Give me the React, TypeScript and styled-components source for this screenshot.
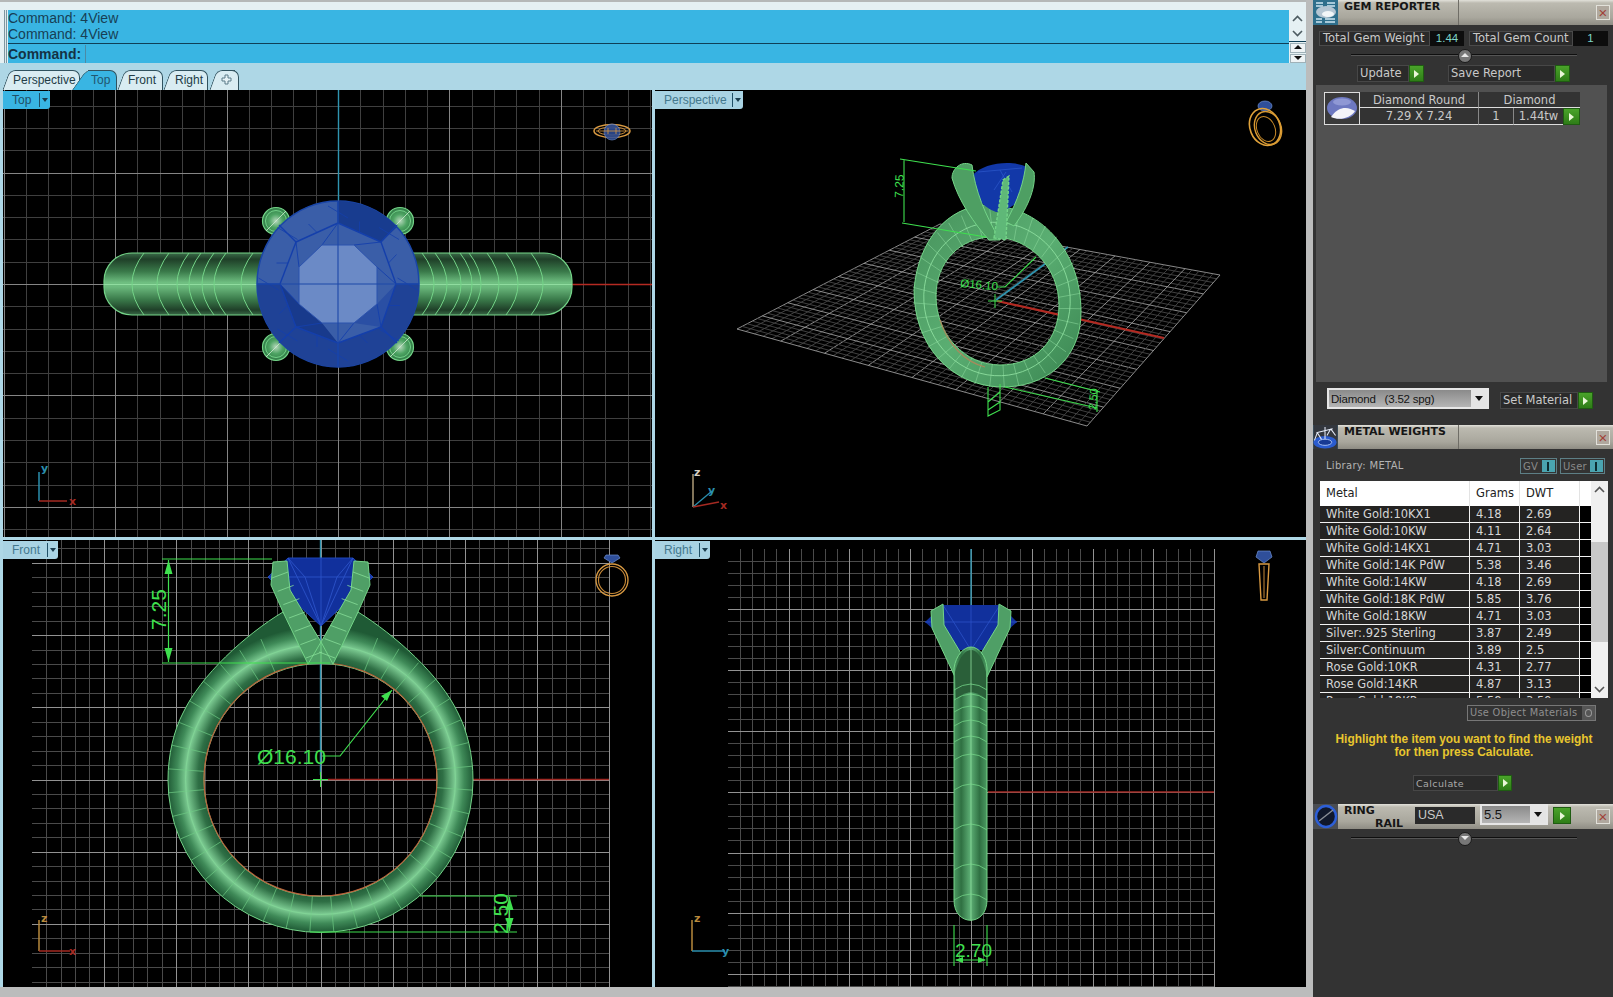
import React from 'react'
import styled, { createGlobalStyle } from 'styled-components'

const GlobalStyle = createGlobalStyle`
  html, body { margin: 0; padding: 0; background: #333; overflow: hidden; }
  #root { width: 1613px; height: 997px; }
`;

const Page = styled.div`
  width: 1613px;
  height: 997px;
  display: flex;
  background: #bbbcbc;
  font-family: "DejaVu Sans", sans-serif;
`;
const LeftColumn = styled.div`
  width: 1306px;
  display: flex;
  flex-direction: column;
  background: #aed7e6;
`;
const TopEdge = styled.div`
  height: 2px;
  background: #b5b8b8;
`;
const CommandBar = styled.div`
  display: flex;
  height: 61px;
  padding: 8px 0 0 4px;
  box-sizing: border-box;
  background: #e5f0f3;
`;
const Grip = styled.div`
  width: 3px;
  margin-right: 1px;
  background: linear-gradient(90deg, #7d96a0 0 1px, #dfe9ec 1px 2px, #7d96a0 2px);
`;
const CommandBlue = styled.div`
  flex: 1;
  display: flex;
  flex-direction: column;
  background: #39b5e3;
  font-family: "Liberation Sans", sans-serif;
  font-size: 14px;
  color: #173f55;
`;
const History = styled.div`
  height: 34px;
  box-sizing: border-box;
  border-bottom: 1px solid #0f3f57;
  line-height: 16px;
`;
const InputRow = styled.div`
  flex: 1;
  display: flex;
  align-items: center;
  font-weight: bold;
  color: #143245;
`;
const Caret = styled.span`
  height: 18px;
  width: 1px;
  margin-left: 4px;
  background: #4b8aa6;
`;
const ScrollCol = styled.div`
  width: 17px;
  display: flex;
  flex-direction: column;
  align-items: center;
  color: #4d5b61;
`;
const Chevrons = styled.div`
  height: 34px;
  width: 100%;
  display: flex;
  flex-direction: column;
  align-items: center;
  justify-content: space-between;
  box-sizing: border-box;
  padding: 5px 0 4px;
  border-bottom: 1px solid #0f3f57;
`;
const SpinBtn = styled.div<{ $down?: boolean }>`
  width: 14px;
  height: 8px;
  margin-top: 1px;
  background: #eef3f5;
  border: 1px solid #9fb1b8;
  position: relative;
  &::after {
    content: "";
    position: absolute;
    left: 3px;
    top: 1px;
    border-left: 4px solid transparent;
    border-right: 4px solid transparent;
    ${p => p.$down ? 'border-top: 4px solid #111;' : 'border-bottom: 4px solid #111;'}
  }
`;
const TabRow = styled.div`
  height: 27px;
  box-sizing: border-box;
  padding: 7px 0 0 3px;
  display: flex;
`;
const Tab = styled.div<{ $active?: boolean; $w: number; $pad: number; $ml?: number }>`
  position: relative;
  width: ${p => p.$w}px;
  height: 20px;
  margin-left: ${p => p.$ml || 0}px;
  padding-left: ${p => p.$pad}px;
  box-sizing: border-box;
  font-family: "Liberation Sans", sans-serif;
  font-size: 12px;
  line-height: 21px;
  color: ${p => p.$active ? '#21566f' : '#233c47'};
  z-index: ${p => p.$active ? 2 : 1};
  span { position: relative; z-index: 2; }
  &::before {
    content: "";
    position: absolute;
    top: 0;
    bottom: 0;
    left: 3px;
    width: 18px;
    transform: skewX(${p => p.$active ? -35 : -20}deg);
    border-radius: 6px 0 0 0;
    border-left: 1px solid #30525f;
    border-top: 1px solid #30525f;
    background: ${p => p.$active ? '#39b5e3' : '#d9ecf2'};
  }
  &::after {
    content: "";
    position: absolute;
    top: 0;
    bottom: 0;
    left: 12px;
    right: 0;
    border-radius: 0 7px 0 0;
    border-right: 1px solid #30525f;
    border-top: 1px solid #30525f;
    background: ${p => p.$active ? '#39b5e3' : '#d9ecf2'};
  }
`;
const ViewGrid = styled.div`
  display: grid;
  grid-template-columns: 649px 651px;
  grid-template-rows: 447px 447px;
  gap: 3px;
  padding-left: 3px;
`;
const Viewport = styled.div`
  position: relative;
  background: #000;
  overflow: hidden;
  svg { display: block; width: 100%; height: 100%; }
`;
const ViewLabel = styled.div<{ $active?: boolean; $w: number }>`
  position: absolute;
  left: 0;
  top: 1px;
  width: ${p => p.$w}px;
  height: 18px;
  box-sizing: border-box;
  padding-left: 9px;
  display: flex;
  justify-content: space-between;
  align-items: center;
  font-family: "Liberation Sans", sans-serif;
  font-size: 12px;
  border-radius: 0 0 3px 0;
  color: ${p => p.$active ? '#1f4f66' : '#44788d'};
  background: ${p => p.$active ? '#39b5e3' : '#a9d3e3'};
`;
const LabelArrow = styled.i`
  width: 10px;
  height: 14px;
  border-left: 1px solid #1f4f66;
  position: relative;
  &::after {
    content: "";
    position: absolute;
    left: 2px;
    top: 5px;
    border-left: 3.5px solid transparent;
    border-right: 3.5px solid transparent;
    border-top: 4px solid #1b3d4e;
  }
`;
const BottomEdge = styled.div`
  flex: 1;
  background: #bbbcbc;
`;
const Divider = styled.div`
  width: 7px;
  background: #bbbcbc;
`;

const Panel = styled.div`
  width: 300px;
  display: flex;
  flex-direction: column;
  background: #333333;
  color: #c9c9c9;
  font-size: 11.5px;
`;
const Header = styled.div<{ $h?: number }>`
  height: ${p => p.$h || 25}px;
  flex: none;
  display: flex;
`;
const HeaderIcon = styled.div`
  width: 25px;
  flex: none;
  background: #3f5f70;
  svg { display: block; width: 25px; height: 100%; }
`;
const TitleStrip = styled.div`
  flex: 1;
  display: flex;
  background: linear-gradient(180deg, #e2e1da 0, #bcbab0 12%, #a9a79d 70%, #8f8d84 100%);
  color: #161616;
  font-weight: bold;
  font-size: 11px;
`;
const TitleText = styled.div`
  width: 121px;
  padding-left: 6px;
  box-sizing: border-box;
  line-height: 14px;
  border-right: 1px solid #6f6d66;
`;
const CloseBox = styled.div`
  width: 14px;
  height: 15px;
  margin: 5px 3px 0 auto;
  box-sizing: border-box;
  border: 1px solid #e2e1da;
  background: #b0a89e;
  color: #a04038;
  font: 15px/13px "Liberation Sans", sans-serif;
  text-align: center;
`;
const StatRow = styled.div`
  display: flex;
  margin-top: 6px;
  padding-left: 6px;
  height: 15px;
`;
const StatLabel = styled.div<{ $w: number }>`
  width: ${p => p.$w}px;
  box-sizing: border-box;
  background: #2a2a2a;
  border: 1px solid #4a4a4a;
  padding-left: 3px;
  line-height: 13px;
  white-space: nowrap;
`;
const StatValue = styled.div<{ $w: number; $mr: number }>`
  width: ${p => p.$w}px;
  margin-right: ${p => p.$mr}px;
  box-sizing: border-box;
  background: #0d0d0d;
  color: #7fd6c8;
  text-align: center;
  font: 11.5px/15px "Liberation Sans", sans-serif;
`;
const SliderRow = styled.div`
  height: 18px;
  flex: none;
  margin: 0 36px 0 38px;
  position: relative;
  &::before {
    content: "";
    position: absolute;
    left: 0;
    right: 0;
    top: 8px;
    height: 1px;
    background: #0f0f0f;
    border-bottom: 1px solid #555;
  }
`;
const SliderKnob = styled.div<{ $down?: boolean }>`
  position: absolute;
  left: 107px;
  top: 3px;
  width: 12px;
  height: 12px;
  border-radius: 50%;
  background: #777;
  border: 1px solid #1a1a1a;
  &::after {
    content: "";
    position: absolute;
    left: 2px;
    top: 3px;
    border-left: 4px solid transparent;
    border-right: 4px solid transparent;
    ${p => p.$down ? 'border-top: 4px solid #e8e8e8;' : 'border-bottom: 4px solid #e8e8e8;'}
  }
`;
const ActionRow = styled.div`
  display: flex;
  margin-top: 1px;
  height: 17px;
  padding-left: 44px;
`;
const ActionLabel = styled.div<{ $w: number; $small?: boolean }>`
  width: ${p => p.$w}px;
  box-sizing: border-box;
  background: #2a2a2a;
  border: 1px solid #474747;
  padding-left: 2px;
  line-height: 15px;
  white-space: nowrap;
  ${p => p.$small && 'font-size: 9.5px; color: #a9a9a9; letter-spacing: 0.4px;'}
`;
const GreenBtn = styled.div<{ $mr?: number; $h?: number; $w?: number; $mt?: number }>`
  width: ${p => p.$w || 15}px;
  height: ${p => p.$h || 17}px;
  flex: none;
  margin-top: ${p => p.$mt || 0}px;
  margin-right: ${p => p.$mr || 0}px;
  box-sizing: border-box;
  border: 1px solid #1f5c12;
  background: linear-gradient(180deg, #4aa32a, #2e7d17);
  display: flex;
  align-items: center;
  justify-content: center;
  &::after {
    content: "";
    border-top: 4px solid transparent;
    border-bottom: 4px solid transparent;
    border-left: 5px solid #eaf7d8;
  }
`;
const GemList = styled.div`
  height: 297px;
  margin: 3px 6px 0 3px;
  padding: 7px 0 0 8px;
  box-sizing: border-box;
  background: #515151;
`;
const GemItem = styled.div`
  display: flex;
  width: 256px;
  height: 33px;
  background: #333;
`;
const GemThumb = styled.div`
  width: 36px;
  box-sizing: border-box;
  border: 1px solid #ddd;
  svg { display: block; width: 34px; height: 31px; }
`;
const GemCols = styled.div`
  flex: 1;
  display: grid;
  grid-template-columns: 119px 35px 49px 17px;
  grid-template-rows: 16px 17px;
`;
const GemCell = styled.div<{ $span?: number; $right?: boolean; $bottom?: boolean }>`
  grid-column: span ${p => p.$span || 1};
  text-align: center;
  line-height: 16px;
  box-sizing: border-box;
  border-right: ${p => p.$right ? '1px solid #888' : 'none'};
  border-bottom: ${p => p.$bottom ? '1px solid #ddd' : 'none'};
  white-space: nowrap;
`;
const MaterialRow = styled.div`
  display: flex;
  align-items: flex-end;
  margin-top: 6px;
  margin-bottom: 16px;
  padding-left: 14px;
  height: 21px;
`;
const SelectBox = styled.div<{ $w: number; $mr: number; $big?: boolean }>`
  width: ${p => p.$w}px;
  height: 21px;
  margin-right: ${p => p.$mr}px;
  box-sizing: border-box;
  border: 2px solid #e6e6e6;
  background: linear-gradient(180deg, #8a8a8a, #b5b5b5);
  color: #141414;
  display: flex;
  align-items: center;
  justify-content: space-between;
  padding-left: 2px;
  font-family: "Liberation Sans", sans-serif;
  font-weight: normal;
  font-size: ${p => p.$big ? 13 : 11.5}px;
  letter-spacing: ${p => p.$big ? 0 : -0.2}px;
  white-space: pre;
`;
const SelectArrow = styled.i`
  width: 16px;
  height: 100%;
  background: #e4e4e4;
  position: relative;
  &::after {
    content: "";
    position: absolute;
    left: 4px;
    top: 6px;
    border-left: 4px solid transparent;
    border-right: 4px solid transparent;
    border-top: 5px solid #111;
  }
`;
const LibraryRow = styled.div`
  height: 32px;
  flex: none;
  display: flex;
  padding: 9px 0 0 13px;
  box-sizing: border-box;
  font-size: 10px;
  color: #b2b2b2;
  letter-spacing: 0.3px;
`;
const LibraryText = styled.div`
  margin-top: 2px;
`;
const ToggleBox = styled.div<{ $w: number; $first?: boolean }>`
  width: ${p => p.$w}px;
  height: 16px;
  margin-left: ${p => p.$first ? 'auto' : '3px'};
  margin-right: ${p => p.$first ? '0' : '8px'};
  box-sizing: border-box;
  border: 1px solid #5d7f86;
  display: flex;
  justify-content: space-between;
  padding-left: 2px;
  line-height: 15px;
  color: #8a8a8a;
`;
const ToggleMark = styled.i`
  width: 13px;
  margin: 1px;
  background: #4aa4b0;
  position: relative;
  &::after {
    content: "";
    position: absolute;
    left: 5px;
    top: 2px;
    width: 2px;
    height: 9px;
    background: #0c2c30;
  }
`;
const TableWrap = styled.div`
  height: 217px;
  flex: none;
  margin: 0 5px 0 7px;
  display: flex;
  overflow: hidden;
`;
const TableBody = styled.div`
  width: 271px;
  display: flex;
  flex-direction: column;
`;
const TableHead = styled.div`
  height: 25px;
  flex: none;
  display: grid;
  grid-template-columns: 150px 50px 60px 11px;
  background: #fff;
  color: #222;
  line-height: 24px;
  font-size: 11.5px;
`;
const TableRow = styled.div`
  height: 17px;
  flex: none;
  display: grid;
  grid-template-columns: 150px 50px 60px 11px;
  box-sizing: border-box;
  background: #242322;
  border-bottom: 1px solid #f2f2f2;
  color: #d6d6d6;
  line-height: 16px;
  white-space: nowrap;
`;
const TableCell = styled.div<{ $head?: boolean }>`
  padding-left: 6px;
  box-sizing: border-box;
  border-right: 1px solid ${p => p.$head ? '#e3e3e3' : '#f2f2f2'};
`;
const BlankCell = styled.div`
  background: #000;
`;
const TableScroll = styled.div`
  width: 17px;
  display: flex;
  flex-direction: column;
  background: #f0f0f0;
  color: #555;
`;
const ScrollThumb = styled.div`
  height: 100px;
  margin-top: 44px;
  background: #c8c8c8;
`;
const ScrollChev = styled.div<{ $end?: boolean }>`
  height: 17px;
  flex: none;
  margin-top: ${p => p.$end ? 'auto' : '0'};
  display: flex;
  align-items: center;
  justify-content: center;
`;
const ObjectRow = styled.div`
  display: flex;
  justify-content: flex-end;
  margin: 7px 17px 0 0;
`;
const ObjectBox = styled.div`
  width: 129px;
  height: 16px;
  box-sizing: border-box;
  border: 1px solid #777;
  display: flex;
  justify-content: space-between;
  padding-left: 2px;
  font-size: 9.8px;
  line-height: 14px;
  color: #8f8f8f;
  letter-spacing: 0.3px;
`;
const ObjectMark = styled.i`
  width: 13px;
  background: #555;
  position: relative;
  &::after {
    content: "";
    position: absolute;
    left: 3px;
    top: 3px;
    width: 5px;
    height: 6px;
    border-radius: 50%;
    border: 1px solid #9a9a9a;
  }
`;
const HintText = styled.div`
  margin-top: 12px;
  height: 27px;
  text-align: center;
  font: bold 11.9px/13px "Liberation Sans", sans-serif;
  color: #e8c62e;
  padding-left: 2px;
`;
const CalcRow = styled.div`
  display: flex;
  margin: 15px 0 13px 100px;
  height: 16px;
`;
const RingHeadText = styled.div`
  width: 77px;
  flex: none;
  padding-left: 6px;
  box-sizing: border-box;
  line-height: 13px;
  div + div { padding-left: 31px; }
`;
const UsaBox = styled.div`
  width: 60px;
  height: 17px;
  margin: 3px 5px 0 0;
  box-sizing: border-box;
  padding-left: 3px;
  background: #2a2a2a;
  color: #c9c9c9;
  font: 12.5px/17px "Liberation Sans", sans-serif;
`;

const metals: [string, string, string][] = [
  ['White Gold:10KX1', '4.18', '2.69'],
  ['White Gold:10KW', '4.11', '2.64'],
  ['White Gold:14KX1', '4.71', '3.03'],
  ['White Gold:14K PdW', '5.38', '3.46'],
  ['White Gold:14KW', '4.18', '2.69'],
  ['White Gold:18K PdW', '5.85', '3.76'],
  ['White Gold:18KW', '4.71', '3.03'],
  ['Silver:.925 Sterling', '3.87', '2.49'],
  ['Silver:Continuum', '3.89', '2.5'],
  ['Rose Gold:10KR', '4.31', '2.77'],
  ['Rose Gold:14KR', '4.87', '3.13'],
  ['Rose Gold:18KR', '5.58', '3.59'],
];

const WIRE = '#74d488';
const DIM = '#3fe04f';
const range = (n: number) => Array.from({ length: n }, (_, i) => i);

type GridProps = { x0: number; x1: number; y0: number; y1: number; cx: number; cy: number; step: number; minorColor?: string; majorColor?: string };
const Grid = ({ x0, x1, y0, y1, cx, cy, step, minorColor = '#4a4a4a', majorColor = '#929292' }: GridProps) => {
  const minor = step / 5;
  const lines: React.ReactElement[] = [];
  const majors: React.ReactElement[] = [];
  for (let k = Math.ceil((x0 - cx) / minor); cx + k * minor <= x1 + 0.5; k++) {
    const x = Math.round(cx + k * minor) + 0.5;
    const el = <line key={'v' + k} x1={x} x2={x} y1={y0} y2={y1} stroke={k % 5 === 0 ? majorColor : minorColor} />;
    if (k % 5 === 0) majors.push(el); else lines.push(el);
  }
  for (let k = Math.ceil((y0 - cy) / minor); cy + k * minor <= y1 + 0.5; k++) {
    const y = Math.round(cy + k * minor) + 0.5;
    const el = <line key={'h' + k} y1={y} y2={y} x1={x0} x2={x1} stroke={k % 5 === 0 ? majorColor : minorColor} />;
    if (k % 5 === 0) majors.push(el); else lines.push(el);
  }
  return <g shapeRendering="crispEdges">{lines}{majors}</g>;
};

const AxisMark = ({ x, y, up, side, upLabel, sideLabel, upColor, sideColor }: { x: number; y: number; up: string; side: string; upLabel: string; sideLabel: string; upColor: string; sideColor: string }) => (
  <g fontFamily="'DejaVu Sans', sans-serif" fontSize="11" fontWeight="bold">
    <path d={`M${x} ${y}${up}`} stroke={upColor} strokeWidth="1.5" fill="none" />
    <path d={`M${x} ${y}${side}`} stroke={sideColor} strokeWidth="1.5" fill="none" />
    <text x={x + 2} y={y - 29} fill={upColor}>{upLabel}</text>
    <text x={x + 30} y={y + 4} fill={sideColor}>{sideLabel}</text>
  </g>
);

const RingIconFront = ({ x, y }: { x: number; y: number }) => (
  <g>
    <path d={`M${x} ${y - 17}l8 -5 -2 -3h-12l-2 3z`} fill="#2f4f9a" stroke="#6f8fd0" strokeWidth="0.7" />
    <circle cx={x} cy={y} r="16" fill="none" stroke="#d99a42" strokeWidth="1.3" />
    <circle cx={x} cy={y} r="13.5" fill="none" stroke="#c98a38" strokeWidth="1.1" />
  </g>
);

const RingIconSide = ({ x, y }: { x: number; y: number }) => (
  <g>
    <path d={`M${x - 8} ${y - 19}l2 -6h12l2 6 -8 6z`} fill="#2f4f9a" stroke="#6f8fd0" strokeWidth="0.7" />
    <path d={`M${x - 5} ${y - 12}h10l-2 36h-6z`} fill="none" stroke="#d99a42" strokeWidth="1.4" />
    <path d={`M${x} ${y - 10}v32`} stroke="#c98a38" strokeWidth="1" />
  </g>
);

const RingIconTop = ({ x, y }: { x: number; y: number }) => (
  <g>
    <ellipse cx={x} cy={y} rx="18" ry="6.5" fill="none" stroke="#d99a42" strokeWidth="1.5" />
    <ellipse cx={x} cy={y} rx="14" ry="4" fill="none" stroke="#c98a38" strokeWidth="1" />
    <ellipse cx={x} cy={y + 1} rx="8" ry="8" fill="#2f4f9a" opacity="0.85" stroke="#6f8fd0" strokeWidth="0.7" />
    <path d={`M${x - 16} ${y}h32M${x - 4} ${y - 3}v6M${x + 4} ${y - 3}v6`} stroke="#d99a42" strokeWidth="0.8" />
  </g>
);

const RingIconPersp = ({ x, y }: { x: number; y: number }) => (
  <g>
    <ellipse cx={x} cy={y - 21} rx="7" ry="5" fill="#2f4f9a" stroke="#6f8fd0" strokeWidth="0.7" />
    <ellipse cx={x} cy={y} rx="15" ry="19" transform={`rotate(-22 ${x} ${y})`} fill="none" stroke="#e0a23a" strokeWidth="1.6" />
    <ellipse cx={x + 3} cy={y + 1} rx="13" ry="17" transform={`rotate(-22 ${x + 3} ${y + 1})`} fill="none" stroke="#d99a32" strokeWidth="1.4" />
    <ellipse cx={x + 1} cy={y + 2} rx="9" ry="13" transform={`rotate(-22 ${x + 1} ${y + 2})`} fill="none" stroke="#c98a28" strokeWidth="1" />
  </g>
);

const TopView = () => {
  const leftArcs = [126, 151, 171, 183, 196, 208, 235];
  const rightArcs = [440, 453, 467, 478, 487, 505, 524, 549];
  const prongs: [number, number][] = [[276, 221], [400, 221], [276, 347], [400, 347]];
  const cx = 338, cy = 284;
  const star = [[338, 223], [381, 242], [396, 284], [381, 327], [338, 343], [296, 327], [280, 284], [296, 242]];
  const edge = [[338, 201], [397, 225], [419, 284], [397, 343], [338, 367], [279, 343], [257, 284], [279, 225]];
  const tableCorners = [[322, 245], [354, 245], [377, 267], [377, 304], [354, 323], [322, 323], [299, 304], [299, 267]];
  const table = tableCorners.map(p => p.join(',')).join(' ');
  return (
    <svg viewBox="3 90 649 447">
      <defs>
        <linearGradient id="bandTop" x1="0" y1="0" x2="0" y2="1">
          <stop offset="0" stopColor="#3a6a48" />
          <stop offset="0.1" stopColor="#1f3f28" />
          <stop offset="0.3" stopColor="#3a7a4a" />
          <stop offset="0.48" stopColor="#70c082" />
          <stop offset="0.55" stopColor="#6ab87c" />
          <stop offset="0.75" stopColor="#3a7a4a" />
          <stop offset="0.92" stopColor="#1f3f28" />
          <stop offset="1" stopColor="#3a6a48" />
        </linearGradient>
        <radialGradient id="prongFill">
          <stop offset="0" stopColor="#b6d8bc" />
          <stop offset="0.5" stopColor="#4da463" />
          <stop offset="1" stopColor="#2f7a45" />
        </radialGradient>
      </defs>
      <Grid x0={3} x1={652} y0={90} y1={537} cx={cx} cy={cy} step={111.4} minorColor="#3f3f3f" majorColor="#858585" />
      <line x1={338.5} x2={338.5} y1={90} y2={200} stroke="#2f94b0" strokeWidth="1.4" />
      <line x1={572} x2={652} y1={284.5} y2={284.5} stroke="#b52a22" strokeWidth="1.6" />
      <rect x="104" y="253" width="468" height="62" rx="28" fill="url(#bandTop)" stroke={WIRE} strokeWidth="1.2" />
      <line x1="104" x2="572" y1="284.5" y2="284.5" stroke="#8fdc9f" strokeWidth="1" />
      {leftArcs.map(x => <path key={x} d={`M${x + 18} 253Q${x - 6} 284 ${x + 18} 315`} fill="none" stroke={WIRE} strokeWidth="1" />)}
      {rightArcs.map(x => <path key={x} d={`M${x - 18} 253Q${x + 6} 284 ${x - 18} 315`} fill="none" stroke={WIRE} strokeWidth="1" />)}
      {prongs.map(([x, y]) => (
        <g key={x + '' + y}>
          <circle cx={x} cy={y} r="13.5" fill="url(#prongFill)" stroke={WIRE} strokeWidth="1.2" />
          <circle cx={x} cy={y} r="10.5" fill="none" stroke="#7fe094" strokeWidth="0.8" />
          <line x1={x - 10} y1={y + 10} x2={x + 10} y2={y - 10} stroke="#cfe8d2" strokeWidth="0.8" />
        </g>
      ))}
      <ellipse cx={cx} cy={cy} rx="81" ry="83" fill="#3a5ea8" stroke="#1a46a8" strokeWidth="1.5" />
      <path d="M257 284A81 83 0 0 0 419 284L396 284 381 327 338 343 296 327 280 284Z" fill="#1f4296" />
      <path d="M338 201A81 83 0 0 1 397 227L381 242 338 223Z" fill="#183c8f" />
      <path d="M280 284L299 304 322 323 296 327ZM338 343L322 323 296 327Z" fill="#183a8c" />
      <path d="M396 284L377 304 354 323 381 327Z" fill="#2a4fa4" />
      {star.map((p, i) => {
        const q = star[(i + 1) % 8];
        const e = edge[i];
        const t = tableCorners[i];
        return (
          <g key={i} stroke="#143fab" strokeWidth="1.4" fill="none">
            <path d={`M${p[0]} ${p[1]}L${q[0]} ${q[1]}`} />
            <path d={`M${p[0]} ${p[1]}L${e[0]} ${e[1]}`} />
            <path d={`M${p[0]} ${p[1]}L${t[0]} ${t[1]}`} strokeWidth="0.9" />
            <path d={`M${(p[0] + e[0]) / 2 + 10} ${(p[1] + e[1]) / 2 + 6}L${(p[0] + e[0]) / 2 - 10} ${(p[1] + e[1]) / 2 - 6}`} strokeWidth="0.8" />
            <path d={`M${(p[0] + q[0]) / 2} ${(p[1] + q[1]) / 2}L${(e[0] + q[0]) / 2} ${(e[1] + q[1]) / 2}`} strokeWidth="0.8" />
          </g>
        );
      })}
      <polygon points={table} fill="#6b8ac6" stroke="#2b52ad" strokeWidth="1" />
      <path d="M338 201V367M257 284H419" stroke="#1c48a8" strokeWidth="1.1" fill="none" />
      <RingIconTop x={612} y={131} />
      <AxisMark x={39} y={501} up="V472" side="H67" upLabel="y" sideLabel="x" upColor="#2b8fae" sideColor="#a52a22" />
    </svg>
  );
};

// perspective floor: simple bilinear over the four corners
const floor = { a: [940, 224], b: [1220, 275], c: [1087, 426], d: [737, 329] };
const floorPt = (u: number, v: number) => {
  const tx = floor.a[0] + (floor.b[0] - floor.a[0]) * u;
  const ty = floor.a[1] + (floor.b[1] - floor.a[1]) * u;
  const bx = floor.d[0] + (floor.c[0] - floor.d[0]) * u;
  const by = floor.d[1] + (floor.c[1] - floor.d[1]) * u;
  return [tx + (bx - tx) * v, ty + (by - ty) * v];
};

const PerspView = () => {
  const cells = 40;
  const floorLines = range(cells + 1).flatMap(i => {
    const t = i / cells;
    const major = i % 5 === 0;
    const stroke = major ? '#9a9a9a' : '#474747';
    const [x1, y1] = floorPt(t, 0);
    const [x2, y2] = floorPt(t, 1);
    const [x3, y3] = floorPt(0, t);
    const [x4, y4] = floorPt(1, t);
    return [
      <line key={'a' + i} x1={x1} y1={y1} x2={x2} y2={y2} stroke={stroke} strokeWidth="0.9" />,
      <line key={'b' + i} x1={x3} y1={y3} x2={x4} y2={y4} stroke={stroke} strokeWidth="0.9" />,
    ];
  });
  const ell = (cx: number, cy: number, rx: number, ry: number, deg: number, a: number) => {
    const r = deg * Math.PI / 180;
    const px = rx * Math.cos(a), py = ry * Math.sin(a);
    return [cx + px * Math.cos(r) - py * Math.sin(r), cy + px * Math.sin(r) + py * Math.cos(r)];
  };
  const mesh = range(36).map(i => {
    const a = i / 36 * Math.PI * 2;
    const [x1, y1] = ell(997, 298, 84, 90, -14, a);
    const [x2, y2] = ell(998, 301, 61, 64, -14, a);
    return <line key={i} x1={x1} y1={y1} x2={x2} y2={y2} stroke="#8fdca0" strokeWidth="0.7" opacity="0.75" />;
  });
  return (
    <svg viewBox="655 90 651 447">
      <defs>
        <linearGradient id="ringPersp" x1="0" y1="0" x2="1" y2="1">
          <stop offset="0" stopColor="#47925c" />
          <stop offset="0.5" stopColor="#5aae72" />
          <stop offset="1" stopColor="#3a8551" />
        </linearGradient>
      </defs>
      {floorLines}
      <line x1="996" y1="300" x2="1068" y2="247" stroke="#2f94b0" strokeWidth="1.8" />
      <line x1="997" y1="301" x2="1164" y2="338" stroke="#b32a22" strokeWidth="2.2" />
      <path d="M995 294v14M988 301h14" stroke={DIM} strokeWidth="1" />
      <path fillRule="evenodd" fill="url(#ringPersp)" stroke={WIRE} strokeWidth="1"
        d="M914 290C918 240 948 207 985 205 1040 205 1081 250 1081 312 1081 360 1045 388 1000 387 950 385 914 345 914 290ZM936 296C936 335 965 365 1000 365 1036 365 1059 340 1059 305 1059 268 1030 237 993 237 960 237 936 262 936 296Z" />
      {mesh}
      <ellipse cx="997" cy="299" rx="73" ry="77" transform="rotate(-14 997 299)" fill="none" stroke="#8fe0a0" strokeWidth="0.8" />
      <path d="M940 320C948 345 965 362 985 367" stroke="#a88a5c" strokeWidth="1.2" fill="none" />
      <path d="M972 176C985 160 1022 160 1030 170 1036 185 1016 211 996 212 982 207 968 192 972 176Z" fill="#1238a8" />
      <path d="M978 172L1022 168M994 190L1006 172M1012 192L1000 170" stroke="#2a55c8" strokeWidth="0.8" />
      <path d="M952 178C958 200 975 225 989 240L1000 240C985 215 975 190 972 165 962 160 952 168 952 178Z" fill="#4e9f63" stroke={WIRE} />
      <path d="M1034 172C1036 185 1030 205 1014 226L1006 222C1018 200 1024 182 1026 163Z" fill="#4e9f63" stroke={WIRE} />
      <path d="M994 238L1003 180 1009 176 1006 240Z" fill="#5fb878" stroke={WIRE} strokeWidth="1.4" strokeDasharray="3 1.5" />
      <g stroke={DIM} strokeWidth="1.1" fill="none">
        <path d="M900 159L976 171M902 223L986 237M904 160V222" />
        <path d="M997 287H1005L1036 257" />
        <path d="M1005 387L1097 408M1045 378L1100 392M1097 390V412" />
        <path d="M988 387V416L1000 410V384M988 402L1000 392M988 410L1000 402" />
      </g>
      <text transform="translate(903 198) rotate(-88)" fill={DIM} fontFamily="Liberation Sans, sans-serif" fontSize="12">7.25</text>
      <text transform="translate(960 287) rotate(5)" fill={DIM} fontFamily="Liberation Sans, sans-serif" fontSize="11.5">Ø16.10</text>
      <text transform="translate(1096 410) rotate(-85)" fill={DIM} fontFamily="Liberation Sans, sans-serif" fontSize="11">2.50</text>
      <RingIconPersp x={1265} y={127} />
      <g fontFamily="'DejaVu Sans', sans-serif" fontSize="11" fontWeight="bold">
        <path d="M693 507V474" stroke="#c9b48a" strokeWidth="1.3" />
        <path d="M693 507L712 491" stroke="#2b8fae" strokeWidth="1.3" />
        <path d="M693 507L719 502" stroke="#a52a22" strokeWidth="1.3" />
        <text x="694" y="476" fill="#d5d0c4">z</text>
        <text x="708" y="494" fill="#2b8fae">y</text>
        <text x="720" y="509" fill="#a52a22">x</text>
      </g>
    </svg>
  );
};

const FrontView = () => {
  const c = 320.5, cyy = 779.5;
  const spokes = range(40).map(i => {
    const a = (i * 9 + 4) * Math.PI / 180;
    // skip the spokes under the head
    if (Math.sin(a) < -0.93) return null;
    return <line key={i} x1={c + 116.5 * Math.cos(a)} y1={cyy + 116.5 * Math.sin(a)} x2={c + 152.5 * Math.cos(a)} y2={cyy + 152.5 * Math.sin(a)} stroke="#6fca84" strokeWidth="0.7" />;
  });
  const rungsL = range(7).map(i => {
    const t = i / 6;
    const x = 280 + t * 34, y = 575 + t * 80;
    return <line key={i} x1={x - 8} y1={y + 3} x2={x + 8} y2={y - 3} stroke="#86dd98" strokeWidth="0.8" />;
  });
  const rungsR = range(7).map(i => {
    const t = i / 6;
    const x = 361 - t * 34, y = 575 + t * 80;
    return <line key={i} x1={x - 8} y1={y - 3} x2={x + 8} y2={y + 3} stroke="#86dd98" strokeWidth="0.8" />;
  });
  return (
    <svg viewBox="3 540 649 447">
      <defs>
        <radialGradient id="ringFront" gradientUnits="userSpaceOnUse" cx="320.5" cy="779.5" r="153">
          <stop offset="0.75" stopColor="#1f5a35" />
          <stop offset="0.8" stopColor="#2f6f45" />
          <stop offset="0.88" stopColor="#7ccb92" />
          <stop offset="0.94" stopColor="#3f8a58" />
          <stop offset="1" stopColor="#1f5a35" />
        </radialGradient>
      </defs>
      <Grid x0={32} x1={610} y0={540} y1={987} cx={320.5} cy={779.5} step={72.2} />
      <line x1="320.5" x2="320.5" y1="540" y2="775" stroke="#2f94b0" strokeWidth="1.4" />
      <line x1="328" x2="609" y1="779.5" y2="779.5" stroke="#a02a24" strokeWidth="1.6" />
      <path d="M313 779.5h15M320.5 772v15" stroke={DIM} strokeWidth="1" />
      <path fillRule="evenodd" fill="url(#ringFront)" stroke={WIRE} strokeWidth="1"
        d="M168 780A152.5 152.5 0 0 0 473 780C473 755 467 730 458 713 440 675 395 635 358 612L320.5 663 283 612C245 635 201 675 183 713 174 730 168 755 168 780ZM204 780A116.5 116.5 0 0 1 437 780A116.5 116.5 0 0 1 204 780Z" />
      {spokes}
      <circle cx={c} cy={cyy} r="116.5" fill="none" stroke="#b8623c" strokeWidth="1.2" />
      <circle cx={c} cy={cyy} r="135" fill="none" stroke="#84d898" strokeWidth="0.7" />
      <polygon points="288,558 353,558 373,577 321,626 268,577" fill="#11309c" stroke="#1c44b8" />
      <path d="M268 577H373M288 558L321 626M353 558L321 626M305 577L321 626M337 577L321 626M288 558L305 577M353 558L337 577M321 558V626" stroke="#2b52c8" strokeWidth="0.9" fill="none" />
      <polygon points="308,664 321,640 333,664" fill="#4f9f66" />
      <path d="M308 664L321 642 290 590 287 561 273 562 271 585 283 612 308 664Z" fill="#4f9f66" stroke={WIRE} />
      <path d="M333 664L321 642 351 590 354 561 368 562 370 585 358 612 333 664Z" fill="#4f9f66" stroke={WIRE} />
      <line x1="321" x2="321" y1="642" y2="664" stroke={WIRE} strokeWidth="1" />
      {rungsL}
      {rungsR}
      <g stroke={DIM} strokeWidth="1.2" fill="none">
        <path d="M162 559H272M162 663H330M168.5 560V662" />
        <path d="M322 756H340L392 690" />
        <path d="M420 896H517M310 932H517M509.5 897V931" />
      </g>
      <g fill={DIM}>
        <path d="M168.5 560l-4 14h8zM168.5 662l-4 -14h8zM392 690l-11 6 6 5zM509.5 897l-4 13h8zM509.5 931l-4 -13h8z" />
      </g>
      <g fill={DIM} fontFamily="Liberation Sans, sans-serif" fontSize="21">
        <text transform="translate(166 630) rotate(-90)">7.25</text>
        <text x="257" y="764">Ø16.10</text>
        <text transform="translate(508 934) rotate(-90)">2.50</text>
      </g>
      <RingIconFront x={612} y={580} />
      <AxisMark x={39} y={951} up="V920" side="H70" upLabel="z" sideLabel="x" upColor="#b98a3c" sideColor="#a52a22" />
    </svg>
  );
};

const RightView = () => {
  const rings = [690, 700, 712, 726, 742, 760, 790, 830, 870, 900];
  return (
    <svg viewBox="655 540 651 447">
      <defs>
        <linearGradient id="bandRight" x1="0" y1="0" x2="1" y2="0">
          <stop offset="0" stopColor="#4c9a62" />
          <stop offset="0.22" stopColor="#2f7042" />
          <stop offset="0.5" stopColor="#5eb076" />
          <stop offset="0.78" stopColor="#2f7042" />
          <stop offset="1" stopColor="#4c9a62" />
        </linearGradient>
      </defs>
      <Grid x0={728} x1={1214} y0={549} y1={987} cx={971} cy={791.7} step={60.8} />
      <line x1="971" x2="971" y1="549" y2="606" stroke="#2f94b0" strokeWidth="1.4" />
      <line x1="988" x2="1214" y1="792" y2="792" stroke="#a02a24" strokeWidth="1.6" />
      <polygon points="943,605 1000,605 1017,622 985,650 957,650 925,622" fill="#11309c" />
      <path d="M925 622H1017M943 605L971 650M1000 605L971 650M971 605V650" stroke="#2b52c8" strokeWidth="0.8" fill="none" />
      <path d="M955 677L932 628 931 611 943 604 944 625 968 665Z" fill="#4f9f66" stroke={WIRE} />
      <path d="M987 677L1010 628 1011 611 999 604 998 625 974 665Z" fill="#4f9f66" stroke={WIRE} />
      <path d="M954 900V668C956 655 964 647 971 647 978 647 986 655 987 668V900C987 927 954 927 954 900Z" fill="url(#bandRight)" stroke={WIRE} />
      <path d="M955 672C960 655 966 650 971 650 976 650 982 655 986 672V700C980 690 962 690 956 700Z" fill="#2a5f39" />
      {rings.map(y => <path key={y} d={`M954 ${y}Q971 ${y - 12} 987 ${y}`} fill="none" stroke={WIRE} strokeWidth="0.8" />)}
      <line x1="971" x2="971" y1="650" y2="921" stroke="#8fe0a0" strokeWidth="0.8" />
      <g stroke={DIM} strokeWidth="1.1" fill="none">
        <path d="M954 925V966M987 925V966M956 960H985" />
      </g>
      <path d="M955 960l8 -3v6zM986 960l-8 -3v6z" fill={DIM} />
      <text x="955" y="957" fill={DIM} fontFamily="Liberation Sans, sans-serif" fontSize="19">2.70</text>
      <RingIconSide x={1264} y={576} />
      <AxisMark x={692} y={951} up="V920" side="H725" upLabel="z" sideLabel="y" upColor="#b98a3c" sideColor="#2b8fae" />
    </svg>
  );
};

const GemIcon = () => (
  <svg viewBox="0 0 25 25">
    <rect width="25" height="25" fill="#2f6f8c" />
    <path d="M3 3h7M14 3h8M3 6h7M14 6h8M3 19h6M12 19h10M3 22h6M12 22h10" stroke="#cfe8f2" strokeWidth="1.5" />
    <ellipse cx="13" cy="12" rx="10" ry="6" fill="#b5c6d3" />
    <ellipse cx="15" cy="14" rx="6" ry="3" fill="#f2f6f8" />
  </svg>
);
const ScaleIcon = () => (
  <svg viewBox="0 0 25 25">
    <rect width="25" height="25" fill="#33373e" />
    <ellipse cx="12" cy="18" rx="12" ry="6.5" fill="#2a5cd0" />
    <path d="M12 2V18M3 8L20 4M4 8L1 16M4 8L9 16M18 4L14 11M18 4L23 11" stroke="#e6ecf8" strokeWidth="1.1" fill="none" />
    <ellipse cx="12" cy="18" rx="7" ry="3.2" fill="#173a94" stroke="#a8c0f2" />
  </svg>
);
const RingIcon = () => (
  <svg viewBox="0 0 25 25">
    <rect width="25" height="25" fill="#4a4d52" />
    <ellipse cx="13" cy="12.5" rx="10" ry="10.5" fill="#10182c" stroke="#2d5fd8" strokeWidth="2.4" />
    <path d="M6 17L20 6" stroke="#8a8f98" strokeWidth="1.4" />
  </svg>
);
const GemThumbArt = () => (
  <svg viewBox="0 0 34 31">
    <rect width="34" height="31" fill="#3a3a3a" />
    <ellipse cx="17" cy="15" rx="15" ry="11" fill="#6d78c0" />
    <path d="M6 24C14 12 24 14 30 18 26 25 14 28 6 24Z" fill="#f4f4f8" />
    <ellipse cx="17" cy="9" rx="9" ry="3.5" fill="#8f98d4" />
  </svg>
);
const PlusOutline = () => (
  <svg width="11" height="11" viewBox="0 0 11 11" style={{ verticalAlign: -1 }}>
    <path d="M4 1H7V4H10V7H7V10H4V7H1V4H4Z" fill="#e6f2f6" stroke="#5b7a88" strokeWidth="1" />
  </svg>
);
const Chev = ({ down }: { down?: boolean }) => (
  <svg width="11" height="7" viewBox="0 0 11 7">
    <path d={down ? 'M1 1L5.5 5.5 10 1' : 'M1 6L5.5 1.5 10 6'} fill="none" stroke="currentColor" strokeWidth="1.6" />
  </svg>
);

const App: React.FC = () => {
  return (
    <Page>
      <GlobalStyle />
      <LeftColumn>
        <TopEdge />
        <CommandBar>
          <Grip />
          <CommandBlue>
            <History>
              <div>Command: 4View</div>
              <div>Command: 4View</div>
            </History>
            <InputRow>Command:<Caret /></InputRow>
          </CommandBlue>
          <ScrollCol>
            <Chevrons>
              <Chev />
              <Chev down />
            </Chevrons>
            <SpinBtn />
            <SpinBtn $down />
          </ScrollCol>
        </CommandBar>
        <TabRow>
          <Tab $w={77} $pad={10}><span>Perspective</span></Tab>
          <Tab $w={41} $ml={-4} $active $pad={15}><span>Top</span></Tab>
          <Tab $w={45} $ml={1} $pad={10}><span>Front</span></Tab>
          <Tab $w={44} $ml={1} $pad={11}><span>Right</span></Tab>
          <Tab $w={29} $ml={2} $pad={11}><span><PlusOutline /></span></Tab>
        </TabRow>
        <ViewGrid>
          <Viewport>
            <TopView />
            <ViewLabel $active $w={47}>Top<LabelArrow /></ViewLabel>
          </Viewport>
          <Viewport>
            <PerspView />
            <ViewLabel $w={88}>Perspective<LabelArrow /></ViewLabel>
          </Viewport>
          <Viewport>
            <FrontView />
            <ViewLabel $w={55}>Front<LabelArrow /></ViewLabel>
          </Viewport>
          <Viewport>
            <RightView />
            <ViewLabel $w={55}>Right<LabelArrow /></ViewLabel>
          </Viewport>
        </ViewGrid>
        <BottomEdge />
      </LeftColumn>
      <Divider />
      <Panel>
        <Header>
          <HeaderIcon><GemIcon /></HeaderIcon>
          <TitleStrip>
            <TitleText>GEM REPORTER</TitleText>
            <CloseBox>×</CloseBox>
          </TitleStrip>
        </Header>
        <StatRow>
          <StatLabel $w={111}>Total Gem Weight</StatLabel>
          <StatValue $w={34} $mr={5}>1.44</StatValue>
          <StatLabel $w={104}>Total Gem Count</StatLabel>
          <StatValue $w={35} $mr={0}>1</StatValue>
        </StatRow>
        <SliderRow><SliderKnob /></SliderRow>
        <ActionRow>
          <ActionLabel $w={52}>Update</ActionLabel>
          <GreenBtn $mr={24} />
          <ActionLabel $w={107}>Save Report</ActionLabel>
          <GreenBtn />
        </ActionRow>
        <GemList>
          <GemItem>
            <GemThumb><GemThumbArt /></GemThumb>
            <GemCols>
              <GemCell $right $bottom>Diamond Round</GemCell>
              <GemCell $span={3} $bottom>Diamond</GemCell>
              <GemCell $right $bottom>7.29 X 7.24</GemCell>
              <GemCell $right $bottom>1</GemCell>
              <GemCell $bottom>1.44tw</GemCell>
              <GreenBtn $w={17} />
            </GemCols>
          </GemItem>
        </GemList>
        <MaterialRow>
          <SelectBox $w={162} $mr={11}>{'Diamond   (3.52 spg)'}<SelectArrow /></SelectBox>
          <ActionLabel $w={78}>Set Material</ActionLabel>
          <GreenBtn />
        </MaterialRow>
        <Header $h={24}>
          <HeaderIcon><ScaleIcon /></HeaderIcon>
          <TitleStrip>
            <TitleText>METAL WEIGHTS</TitleText>
            <CloseBox>×</CloseBox>
          </TitleStrip>
        </Header>
        <LibraryRow>
          <LibraryText>Library: METAL</LibraryText>
          <ToggleBox $first $w={37}>GV<ToggleMark /></ToggleBox>
          <ToggleBox $w={45}>User<ToggleMark /></ToggleBox>
        </LibraryRow>
        <TableWrap>
          <TableBody>
            <TableHead>
              <TableCell $head>Metal</TableCell>
              <TableCell $head>Grams</TableCell>
              <TableCell $head>DWT</TableCell>
            </TableHead>
            {metals.map(([name, grams, dwt]) => (
              <TableRow key={name}>
                <TableCell>{name}</TableCell>
                <TableCell>{grams}</TableCell>
                <TableCell>{dwt}</TableCell>
                <BlankCell />
              </TableRow>
            ))}
          </TableBody>
          <TableScroll>
            <ScrollChev><Chev /></ScrollChev>
            <ScrollThumb />
            <ScrollChev $end><Chev down /></ScrollChev>
          </TableScroll>
        </TableWrap>
        <ObjectRow>
          <ObjectBox>Use Object Materials<ObjectMark /></ObjectBox>
        </ObjectRow>
        <HintText>
          Highlight the item you want to find the weight<br />for then press Calculate.
        </HintText>
        <CalcRow>
          <ActionLabel $w={85} $small>Calculate</ActionLabel>
          <GreenBtn $h={16} $w={14} />
        </CalcRow>
        <Header>
          <HeaderIcon><RingIcon /></HeaderIcon>
          <TitleStrip>
            <RingHeadText>
              <div>RING</div>
              <div>RAIL</div>
            </RingHeadText>
            <UsaBox>USA</UsaBox>
            <SelectBox $w={68} $mr={5} $big>5.5<SelectArrow /></SelectBox>
            <GreenBtn $w={18} $h={17} $mt={3} />
            <CloseBox>×</CloseBox>
          </TitleStrip>
        </Header>
        <SliderRow><SliderKnob $down /></SliderRow>
      </Panel>
    </Page>
  );
};
export default App;
